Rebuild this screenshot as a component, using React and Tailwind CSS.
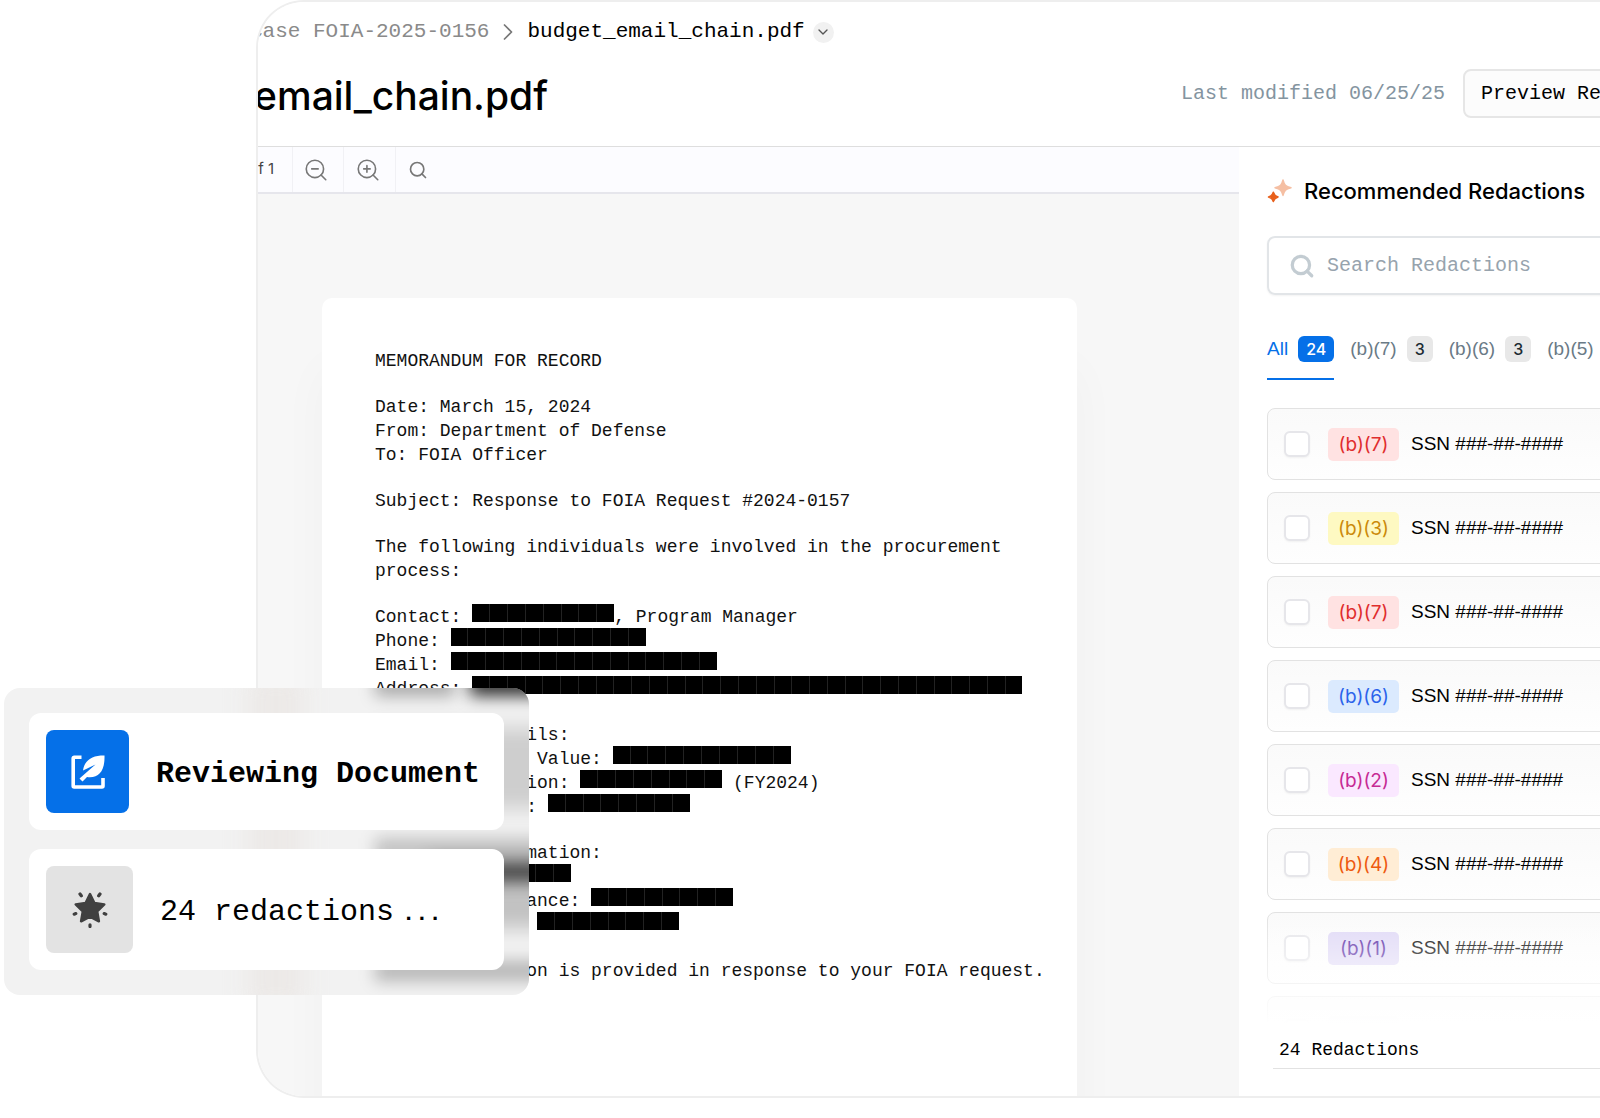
import { useState } from "react";
import { ChevronDown, ChevronRight, Search, ZoomIn, ZoomOut } from "lucide-react";

const MONO = "font-['Liberation_Mono',monospace]";
const SANS = "font-['Inter',sans-serif]";
const ARIAL = "font-['Liberation_Sans',sans-serif]";

const tabs = [
  { label: "All", count: 24 },
  { label: "(b)(7)", count: 3 },
  { label: "(b)(6)", count: 3 },
  { label: "(b)(5)", count: 3 },
];

const redactions = [
  { id: 1, code: "(b)(7)", color: "bg-[#ffe2e2] text-[#e02d2d]" },
  { id: 2, code: "(b)(3)", color: "bg-[#fef9c2] text-[#cb8a0a]" },
  { id: 3, code: "(b)(7)", color: "bg-[#ffe2e2] text-[#e02d2d]" },
  { id: 4, code: "(b)(6)", color: "bg-[#dbeafe] text-[#2b63eb]" },
  { id: 5, code: "(b)(2)", color: "bg-[#fae8ff] text-[#c62a94]" },
  { id: 6, code: "(b)(4)", color: "bg-[#ffedd5] text-[#ee5a10]" },
  { id: 7, code: "(b)(1)", color: "bg-[#e0d9f6] text-[#5a2ca5]" },
  { id: 8, code: "(b)(5)", color: "bg-[#f3f4f6] text-[#9ca3af]" },
];

// Black bar made of n block cells
const Redacted = ({ cells }) => (
  <span
    className="-mt-1 inline-flex h-[18px] bg-black divide-x divide-[#222222]"
    style={{ width: Math.round(cells * 17.75) }}
  >
    {Array.from({ length: cells }, (_, i) => (
      <span key={i} className="flex-1" />
    ))}
  </span>
);

const SparklesIcon = () => (
  <svg width="25" height="25" viewBox="0 0 25 25" className="shrink-0">
    <path
      d="M16 1c1.200 5 2.600 6.500 8 7.700c-5.400 1.200-6.800 2.700-8 7.700c-1.200-5-2.600-6.500-8-7.700c5.400-1.200 6.800-2.700 8-7.700z"
      fill="#f5bfa3"
      stroke="#f5bfa3"
      strokeWidth="1.500"
      strokeLinejoin="round"
    />
    <path
      d="M6.300 13.200c.8 3 1.700 3.900 4.800 4.700c-3.100.8-4 1.700-4.800 4.700c-.8-3-1.700-3.900-4.800-4.700c3.100-.8 4-1.700 4.800-4.700z"
      fill="#e8601c"
      stroke="#e8601c"
      strokeWidth="1.500"
      strokeLinejoin="round"
    />
  </svg>
);

const ReviewIcon = () => (
  <svg width="34" height="34" viewBox="0 0 34 34" fill="none">
    <path
      d="M10.500 2.200H3.200a1 1 0 0 0-1 1V31a1 1 0 0 0 1 1H31a1 1 0 0 0 1-1V23"
      stroke="white"
      strokeWidth="3.600"
      strokeLinejoin="round"
    />
    <path
      d="M33.500 0.500C22 .3 13.500 4.500 12 15.500L24.500 9.500L8.500 23.500L11.500 26.500L16 22C28 23.500 34 16 33.500 0.500z"
      fill="white"
    />
  </svg>
);

const StarIcon = () => (
  <svg width="36" height="36" viewBox="0 0 36 36" fill="#404040" stroke="#404040">
    <path
      d="M18 2l4.400 9 9.900 1.400-7.100 7 1.700 9.900L18 24.700l-8.900 4.600 1.700-9.900-7.100-7 9.900-1.400z"
      strokeWidth="2.500"
      strokeLinejoin="round"
    />
    <path
      d="M8 2l1.300 1.800M28 2l-1.300 1.800M2.200 22.200l1.600-.6M33.800 22.200l-1.600-.6M18 32.800v1.700"
      strokeWidth="3.200"
      strokeLinecap="round"
    />
  </svg>
);

const Header = () => (
  <header className="flex h-[145px] items-start border-b border-[#dedede] bg-white">
    <div className="min-w-0 flex-1 pt-4">
      <nav className={`${MONO} -ml-2 flex h-7 items-center text-[21px] whitespace-nowrap`}>
        <a href="#case" className="text-[#8a8a8a]">Case FOIA-2025-0156</a>
        <ChevronRight className="mx-[5px] text-[#777777]" size={28} strokeWidth={1.5} />
        <span className="text-black">budget_email_chain.pdf</span>
        <button
          aria-label="Choose file"
          className="ml-2 flex size-[21px] items-center justify-center rounded-full bg-[#f1f1f1] text-[#555555]"
        >
          <ChevronDown size={16} />
        </button>
      </nav>
      <h1 className={`${SANS} -ml-[154px] mt-[26px] text-[39px] leading-12 font-medium whitespace-nowrap`}>
        budget_email_chain.pdf
      </h1>
    </div>
    <div className={`${MONO} flex w-[419px] shrink-0 items-center gap-4.5 pt-[67px] text-[20px] whitespace-nowrap`}>
      <span className="text-[#8494a0]">Last modified 06/25/25</span>
      <button className="h-[49px] shrink-0 rounded-lg border-2 border-[#e6e6e6] bg-[#fcfcfc] px-4 text-black">
        Preview Redactions
      </button>
    </div>
  </header>
);

const Toolbar = () => (
  <div className="flex h-[47px] items-center border-b-2 border-[#e6e6ec] bg-[#fcfcff] text-[#777777]">
    <span className={`${SANS} -ml-6 w-[58px] pr-[18px] text-right text-[15px] whitespace-nowrap text-[#444444]`}>
      1 of 1
    </span>
    <div className="flex h-full divide-x divide-[#f1f1f5] border-x border-[#f1f1f5]">
      <button aria-label="Zoom out" className="flex w-[51px] items-center justify-center pr-1">
        <ZoomOut size={26} strokeWidth={1.5} />
      </button>
      <button aria-label="Zoom in" className="flex w-[51px] items-center justify-center pr-1">
        <ZoomIn size={26} strokeWidth={1.5} />
      </button>
    </div>
    <button aria-label="Find" className="flex w-12 items-center justify-center pr-1">
      <Search size={20} strokeWidth={2} />
    </button>
  </div>
);

const Memo = () => (
  <article
    className={`${MONO} flex flex-1 flex-col gap-[22px] rounded-t-[10px] bg-white pt-[51px] pr-8 pb-[113px] pl-[53px] text-[18px] leading-6 whitespace-nowrap text-[#111111] shadow-[0_70px_50px_rgba(0,0,0,0.03)]`}
  >
    <p>MEMORANDUM FOR RECORD</p>
    <p>
      Date: March 15, 2024<br />
      From: Department of Defense<br />
      To: FOIA Officer
    </p>
    <p>Subject: Response to FOIA Request #2024-0157</p>
    <p>
      The following individuals were involved in the procurement<br />
      process:
    </p>
    <p>
      Contact: <Redacted cells={8} />, Program Manager<br />
      Phone: <Redacted cells={11} /><br />
      Email: <Redacted cells={15} /><br />
      Address: <Redacted cells={31} />
    </p>
    <p>
      Financial Details:<br />
      Total Contract Value: <Redacted cells={10} /><br />
      Budget Allocation: <Redacted cells={8} /> (FY2024)<br />
      Account Number: <Redacted cells={8} />
    </p>
    <p>
      Personal Information:<br />
      SSN: <Redacted cells={8} /><br />
      Security Clearance: <Redacted cells={8} /><br />
      Date of Birth: <Redacted cells={8} />
    </p>
    <p>This information is provided in response to your FOIA request.</p>
  </article>
);

const Sidebar = () => {
  const [active, setActive] = useState("All");

  return (
    <aside className={`${SANS} flex w-[361px] shrink-0 flex-col bg-white pl-7`}>
      <div className="mt-7 flex h-8 items-center gap-3 whitespace-nowrap">
        <SparklesIcon />
        <h2 className="text-[22px] font-medium text-black">Recommended Redactions</h2>
      </div>

      {/* Search */}
      <label className="mt-[29px] -mr-8 flex h-[59px] items-center gap-3 rounded-lg border-2 border-[#e2e5e8] px-5 shadow-xs">
        <Search className="shrink-0 text-[#c3ccd2]" size={26} strokeWidth={3} />
        <input
          type="text"
          aria-label="Search Redactions"
          placeholder="Search Redactions"
          className={`${MONO} min-w-0 flex-1 text-[20px] outline-none placeholder:text-[#97a3ad]`}
        />
      </label>

      {/* Filter tabs */}
      <div role="tablist" className={`${ARIAL} mt-[41px] flex gap-4 text-[19px] whitespace-nowrap`}>
        {tabs.map((t) => (
          <button
            key={t.label}
            role="tab"
            aria-selected={active === t.label}
            onClick={() => setActive(t.label)}
            className={`flex h-11 shrink-0 items-start gap-2.5 border-b-2 leading-[26px] ${
              active === t.label
                ? "border-[#0570e8] text-[#0570e8]"
                : "border-transparent text-[#6a7a86]"
            }`}
          >
            {t.label}
            <span
              className={`${SANS} rounded-md px-2 text-[16px] font-medium ${
                active === t.label ? "bg-[#0570e8] text-white" : "bg-[#e8e8e8] text-[#1c2b33]"
              }`}
            >
              {t.count}
            </span>
          </button>
        ))}
      </div>

      {/* Redaction rows, fading out at the bottom */}
      <div className="relative mt-7 -mr-8 h-[616px] overflow-hidden">
        <ul className="flex flex-col gap-3">
          {redactions.map((r) => (
            <li key={r.id}>
              <label className="flex h-[72px] items-center rounded-lg border border-[#e2e2e2] bg-linear-to-b from-[#fafafa] to-[#fefefe] pl-4">
                <input
                  type="checkbox"
                  className="size-[26px] appearance-none rounded-md border-2 border-[#e6e6ea] bg-white shadow-xs"
                />
                <span className={`ml-[18px] w-[71px] rounded-[5px] text-center text-[19px] leading-[33px] ${r.color}`}>
                  {r.code}
                </span>
                <span className={`${ARIAL} ml-3 text-[19px] whitespace-nowrap text-black`}>
                  SSN ###-##-####
                </span>
              </label>
            </li>
          ))}
        </ul>
        <div className="pointer-events-none absolute inset-x-0 bottom-0 h-26 bg-linear-to-b from-white/5 to-white" />
      </div>

      <div className={`${MONO} ml-[6px] border-b border-[#e2e2e2] pt-[14px] pb-1.5 pl-[6px] text-[18px] leading-6 text-black`}>
        24 Redactions
      </div>
    </aside>
  );
};

// Smudges of the memo lines seen through the frosted panel
const Frost = () => (
  <div aria-hidden="true" className="absolute inset-0 overflow-hidden rounded-2xl bg-[#f2f2f2]">
    <div className="absolute -inset-y-4 left-[244px] w-14 bg-[#ece9e7] blur-md" />
    <div className="absolute -top-3 left-[371px] h-5 w-20 bg-black/30 blur-[8px]" />
    <div className="absolute -top-4 -right-8 left-[466px] h-6 bg-black/80 blur-[8px]" />
    <div className="absolute top-10 -right-8 left-[371px] h-20 bg-black/15 blur-[10px]" />
    <div className="absolute top-[150px] -right-8 left-[371px] h-6 bg-black/20 blur-[8px]" />
    <div className="absolute top-[174px] -right-8 left-[424px] h-5 bg-black/80 blur-[9px]" />
    <div className="absolute top-[196px] -right-8 left-[371px] h-11 bg-black/20 blur-[10px]" />
    <div className="absolute top-[273px] -right-8 left-[371px] h-5 bg-black/25 blur-[8px]" />
  </div>
);

const StatusPanel = () => (
  <div className={`${MONO} absolute top-[688px] left-1 w-[525px] text-[30px] whitespace-nowrap text-black`}>
    <Frost />
    <div className="relative flex flex-col gap-[19px] p-[25px]">
      <div className="flex items-center gap-[27px] rounded-xl bg-white p-[17px]">
        <div className="flex size-[83px] items-center justify-center rounded-lg bg-[#0570e8]">
          <ReviewIcon />
        </div>
        <span className="pt-1.5 font-bold">Reviewing Document</span>
      </div>
      <div className="flex items-center gap-[27px] rounded-xl bg-white p-[17px]">
        <div className="flex size-[87px] items-center justify-center rounded-lg bg-[#e3e3e3]">
          <StarIcon />
        </div>
        <span className="pt-1.5">
          24 redactions<span className="ml-2 text-[22px] font-bold">...</span>
        </span>
      </div>
    </div>
  </div>
);

const App = () => {
  return (
    <div className="relative overflow-hidden bg-white pb-5 pl-64">
      <main className="overflow-hidden rounded-l-[48px] border-y-2 border-l-2 border-[#eeeeee]">
        <Header />
        <div className="flex">
          <section className="min-w-0 flex-1 bg-[#f7f7f7]">
            <Toolbar />
            <div className="flex overflow-hidden pt-[104px] pr-[166px] pl-16">
              <Memo />
            </div>
          </section>
          <Sidebar />
        </div>
      </main>
      <StatusPanel />
    </div>
  );
};

export default App;
